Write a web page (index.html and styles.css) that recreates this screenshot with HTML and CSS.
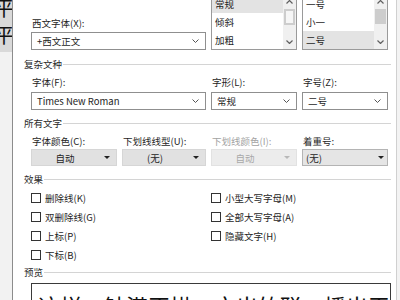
FILE: index.html
```html
<!DOCTYPE html>
<html lang="zh-CN">

<head>
    <meta charset="UTF-8">
    <title>字体</title>
    <link rel="stylesheet" href="styles.css">
</head>

<body>
    <div class="screen">
        <div class="doc-edge">
            <div class="doc-page"><span>平</span><span>平</span></div>
        </div>

        <div class="dialog">
            <div class="fields top-row">
                <div class="field span-2">
                    <div class="label">西文字体(X):</div>
                    <div class="combo"><span>+西文正文</span><svg class="chev" viewBox="0 0 7 4"><polyline points="0.5,0.5 3.5,3.5 6.5,0.5"/></svg></div>
                </div>
                <div class="listbox">
                    <ul>
                        <li class="selected">常规</li>
                        <li>倾斜</li>
                        <li>加粗</li>
                    </ul>
                    <div class="scrollbar">
                        <div class="sb-btn"><svg viewBox="0 0 7 4"><polyline points="0.5,3.5 3.5,0.5 6.5,3.5"/></svg></div>
                        <div class="sb-track"><div class="thumb hollow"></div></div>
                        <div class="sb-btn"><svg viewBox="0 0 7 4"><polyline points="0.5,0.5 3.5,3.5 6.5,0.5"/></svg></div>
                    </div>
                </div>
                <div class="listbox">
                    <ul>
                        <li>一号</li>
                        <li>小一</li>
                        <li class="selected">二号</li>
                    </ul>
                    <div class="scrollbar">
                        <div class="sb-btn"><svg viewBox="0 0 7 4"><polyline points="0.5,3.5 3.5,0.5 6.5,3.5"/></svg></div>
                        <div class="sb-track"><div class="thumb"></div></div>
                        <div class="sb-btn"><svg viewBox="0 0 7 4"><polyline points="0.5,0.5 3.5,3.5 6.5,0.5"/></svg></div>
                    </div>
                </div>
            </div>

            <div class="section first"><span>复杂文种</span></div>
            <div class="fields labels">
                <div class="label span-2">字体(F):</div>
                <div class="label">字形(L):</div>
                <div class="label">字号(Z):</div>
            </div>
            <div class="fields">
                <div class="combo span-2"><span>Times New Roman</span><svg class="chev" viewBox="0 0 7 4"><polyline points="0.5,0.5 3.5,3.5 6.5,0.5"/></svg></div>
                <div class="combo"><span>常规</span><svg class="chev" viewBox="0 0 7 4"><polyline points="0.5,0.5 3.5,3.5 6.5,0.5"/></svg></div>
                <div class="combo"><span>二号</span><svg class="chev" viewBox="0 0 7 4"><polyline points="0.5,0.5 3.5,3.5 6.5,0.5"/></svg></div>
            </div>

            <div class="section"><span>所有文字</span></div>
            <div class="fields labels">
                <div class="label">字体颜色(C):</div>
                <div class="label">下划线线型(U):</div>
                <div class="label disabled">下划线颜色(I):</div>
                <div class="label">着重号:</div>
            </div>
            <div class="fields">
                <div class="dropbtn"><span>自动</span><i class="tri"></i></div>
                <div class="dropbtn"><span>(无)</span><i class="tri"></i></div>
                <div class="dropbtn disabled"><span>自动</span><i class="tri"></i></div>
                <div class="dropbtn list"><span>(无)</span><i class="tri"></i></div>
            </div>

            <div class="section"><span>效果</span></div>
            <div class="fields effects">
                <div class="checks span-2">
                    <label class="check"><i class="box"></i>删除线(K)</label>
                    <label class="check"><i class="box"></i>双删除线(G)</label>
                    <label class="check"><i class="box"></i>上标(P)</label>
                    <label class="check"><i class="box"></i>下标(B)</label>
                </div>
                <div class="checks span-2">
                    <label class="check"><i class="box"></i>小型大写字母(M)</label>
                    <label class="check"><i class="box"></i>全部大写字母(A)</label>
                    <label class="check"><i class="box"></i>隐藏文字(H)</label>
                </div>
            </div>

            <div class="section preview-title"><span>预览</span></div>
            <div class="preview">这样，钟港正拱，文出竹联，播出平</div>
        </div>

        <div class="win-edge"></div>
    </div>
</body>

</html>
```

FILE: styles.css
```css
body {
    margin: 0;
    font-family: "Noto Sans CJK SC", "Liberation Sans", sans-serif;
    font-size: 9.5px;
    color: #1e1e1e;
    background: #fff;
}

.screen {
    display: flex;
    width: 400px;
    height: 300px;
    overflow: hidden;
}

/* document page peeking out on the left */
.doc-edge {
    width: 12px;
    flex-shrink: 0;
    background: #f2f2f2;
    overflow: hidden;
}

.doc-page {
    height: 52px;
    background: #d9d9d9;
    display: flex;
    flex-direction: column;
    overflow: hidden;
}

.doc-page span {
    font-size: 20px;
    line-height: 27px;
    margin-left: -6px;
    color: #111;
}

.doc-page span:first-child {
    margin-top: -6px;
}

.dialog {
    flex: 1;
    border-left: 1px solid #8c8c8c;
    border-right: 1px solid #d0d0d0;
    padding: 0 5px 0 11px;
    background: #fff;
}

.win-edge {
    width: 6px;
    background: #f3f3f3;
}

.fields {
    display: grid;
    grid-template-columns: 86px 84px 86px 86px;
    column-gap: 5px;
    margin-left: 7px;
}

.span-2 {
    grid-column: span 2;
}

.top-row {
    margin-top: -6px;
    align-items: end;
}

.label {
    line-height: 12px;
    padding-left: 1px;
    white-space: nowrap;
}

.field .label {
    margin-bottom: 3px;
}

.label.disabled {
    color: #a2a2a2;
}

.labels {
    margin-top: 6px;
    margin-bottom: 4px;
}

.combo {
    box-sizing: border-box;
    height: 18px;
    border: 1px solid #8f8f8f;
    background: #fff;
    display: flex;
    align-items: center;
    padding: 0 6px 0 5px;
}

.combo span {
    flex: 1;
    white-space: nowrap;
}

.chev {
    width: 7px;
    height: 4px;
    fill: none;
    stroke: #555;
    stroke-width: 1;
}

.listbox {
    box-sizing: border-box;
    height: 56px;
    border: 1px solid #9a9a9a;
    display: flex;
    background: #fff;
}

.listbox ul {
    flex: 1;
    list-style: none;
    margin: 0;
    padding: 0;
}

.listbox li {
    height: 18px;
    line-height: 18px;
    padding-left: 3px;
}

.listbox li.selected {
    background: #e3e3e3;
}

.scrollbar {
    width: 13px;
    background: #f0f0f0;
    display: flex;
    flex-direction: column;
}

.sb-btn {
    height: 14px;
    display: flex;
    align-items: center;
    justify-content: center;
}

.sb-btn svg {
    width: 7px;
    height: 4px;
    fill: none;
    stroke: #606060;
    stroke-width: 1.2;
}

.sb-track {
    flex: 1;
    padding: 0 1px;
}

.thumb {
    height: 15px;
    background: #cdcdcd;
}

.thumb.hollow {
    box-sizing: border-box;
    height: 16px;
    border: 2px solid #cdcdcd;
    background: #f6f6f6;
}

.section {
    display: flex;
    align-items: center;
    line-height: 12px;
    margin-top: 7px;
    color: #2a2a2a;
}

.section.first {
    margin-top: 8px;
}

.section::after {
    content: "";
    flex: 1;
    height: 1px;
    background: #d4d4d4;
    margin-left: 1px;
}

.dropbtn {
    box-sizing: border-box;
    height: 17px;
    margin-top: -2px;
    background: #e1e1e1;
    border: 1px solid #d6d6d6;
    display: flex;
    align-items: center;
}

.dropbtn span {
    flex: 1;
    text-align: center;
}

.tri {
    width: 18px;
    height: 3px;
    display: flex;
    justify-content: center;
}

.tri::before {
    content: "";
    border-left: 3px solid transparent;
    border-right: 3px solid transparent;
    border-top: 3px solid #222;
}

.dropbtn.disabled {
    background: #ececec;
    border-color: #e2e2e2;
    color: #a8a8a8;
}

.dropbtn.disabled .tri::before {
    border-top-color: #b8b8b8;
}

.dropbtn.list {
    background: #e5e5e5;
    border-color: #b4b4b4;
}

.dropbtn.list span {
    text-align: left;
    padding-left: 3px;
}

.dropbtn.list .tri {
    width: 12px;
}

.effects {
    margin-top: 7px;
}

.checks {
    display: flex;
    flex-direction: column;
    gap: 7px;
}

.check {
    display: flex;
    align-items: center;
    line-height: 12px;
    white-space: nowrap;
}

.box {
    box-sizing: border-box;
    width: 10px;
    height: 10px;
    border: 1px solid #333;
    background: #fff;
    margin-right: 4px;
}

.preview-title {
    margin-top: 5px;
}

.preview {
    margin: 5px 0 0 7px;
    height: 40px;
    border: 1px solid #3a3a3a;
    padding: 8px 0 0 6px;
    font-size: 22px;
    line-height: 26px;
    white-space: nowrap;
    overflow: hidden;
    color: #111;
}
```
